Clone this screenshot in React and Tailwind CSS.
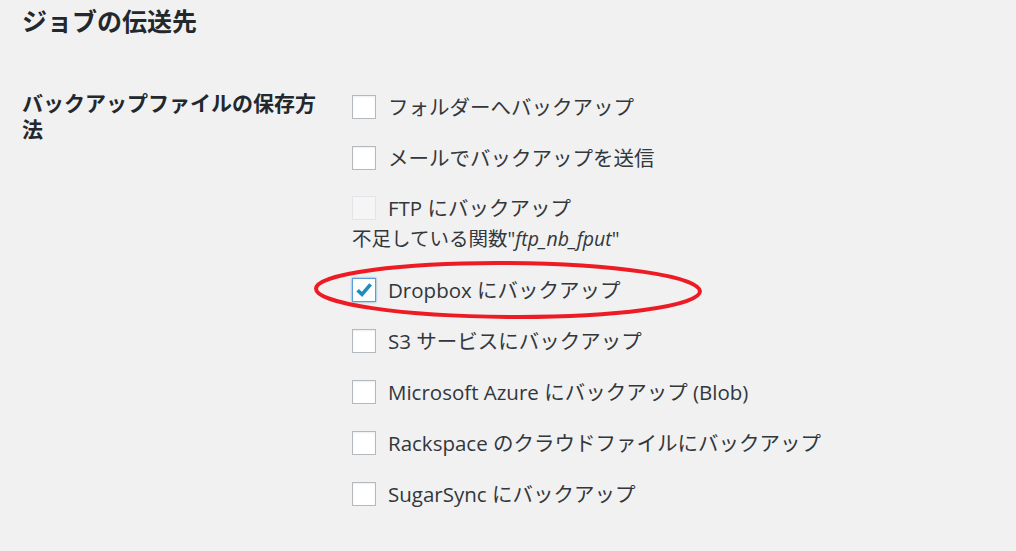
import React from 'react'

const jp = { fontFamily: '"Open Sans", "Noto Sans CJK JP", sans-serif' }

const options = [
  { label: 'フォルダーへバックアップ' },
  { label: 'メールでバックアップを送信' },
  { label: 'FTP にバックアップ', disabled: true, note: true },
  { label: 'Dropbox にバックアップ', checked: true },
  { label: 'S3 サービスにバックアップ' },
  { label: 'Microsoft Azure にバックアップ (Blob)' },
  { label: 'Rackspace のクラウドファイルにバックアップ' },
  { label: 'SugarSync にバックアップ' },
]

function Checkbox({ checked, disabled }) {
  if (disabled) {
    return <span className="block w-6 h-6 shrink-0 border border-[#e2e4e7] bg-[#f5f5f5]" />
  }
  return (
    <span
      className={
        'relative block w-6 h-6 shrink-0 border bg-white ' +
        (checked ? 'border-[#5b9dd9] shadow-[0_0_2px_rgba(30,140,190,0.8)]' : 'border-[#b4b9be] shadow-[inset_0_1px_2px_rgba(0,0,0,0.07)]')
      }
    >
      {checked && (
        <svg className="absolute -left-px -top-px" width="24" height="24" viewBox="0 0 24 24">
          <path d="M5.6 12.2 L10 16.4 L18.6 6.4" fill="none" stroke="#1e8cbe" strokeWidth="3.6" strokeLinejoin="miter" />
        </svg>
      )}
    </span>
  )
}

function Option({ label, checked, disabled }) {
  return (
    <div className="flex items-center gap-3">
      <Checkbox checked={checked} disabled={disabled} />
      <span className="text-[20.5px] leading-6 text-[#32373c] whitespace-nowrap">{label}</span>
    </div>
  )
}

export default function App() {
  return (
    <div className="relative w-full h-[551px] bg-[#f1f1f1] overflow-hidden pl-[22px]" style={jp}>
      <h2 className="pt-[5px] text-[25px] leading-[32px] font-semibold text-[#23282d]">ジョブの伝送先</h2>

      <div className="flex mt-[52px]">
        <div className="w-[330px] pt-[1px] text-[21px] leading-[26px] font-semibold text-[#23282d]">
          <div className="w-[300px]">バックアップファイルの保存方法</div>
        </div>

        <div className="flex flex-col -mt-[8px]">
          {options.map((o) =>
            o.note ? (
              <div key={o.label} className="pt-[13px] pb-[11px]">
                <Option {...o} />
                <div className="mt-[5px] h-[28px] leading-[28px] text-[19.5px] text-[#32373c] whitespace-nowrap">
                  不足している関数"<em>ftp_nb_fput</em>"
                </div>
              </div>
            ) : (
              <div key={o.label} className="h-[51px] flex items-center">
                <Option {...o} />
              </div>
            )
          )}
        </div>
      </div>

      {/* red annotation ellipse */}
      <svg className="absolute inset-0 pointer-events-none" width="1016" height="551">
        <ellipse cx="508" cy="290" rx="192" ry="27" fill="none" stroke="#ed1c24" strokeWidth="4" transform="rotate(0.4 508 290)" />
      </svg>
    </div>
  )
}
